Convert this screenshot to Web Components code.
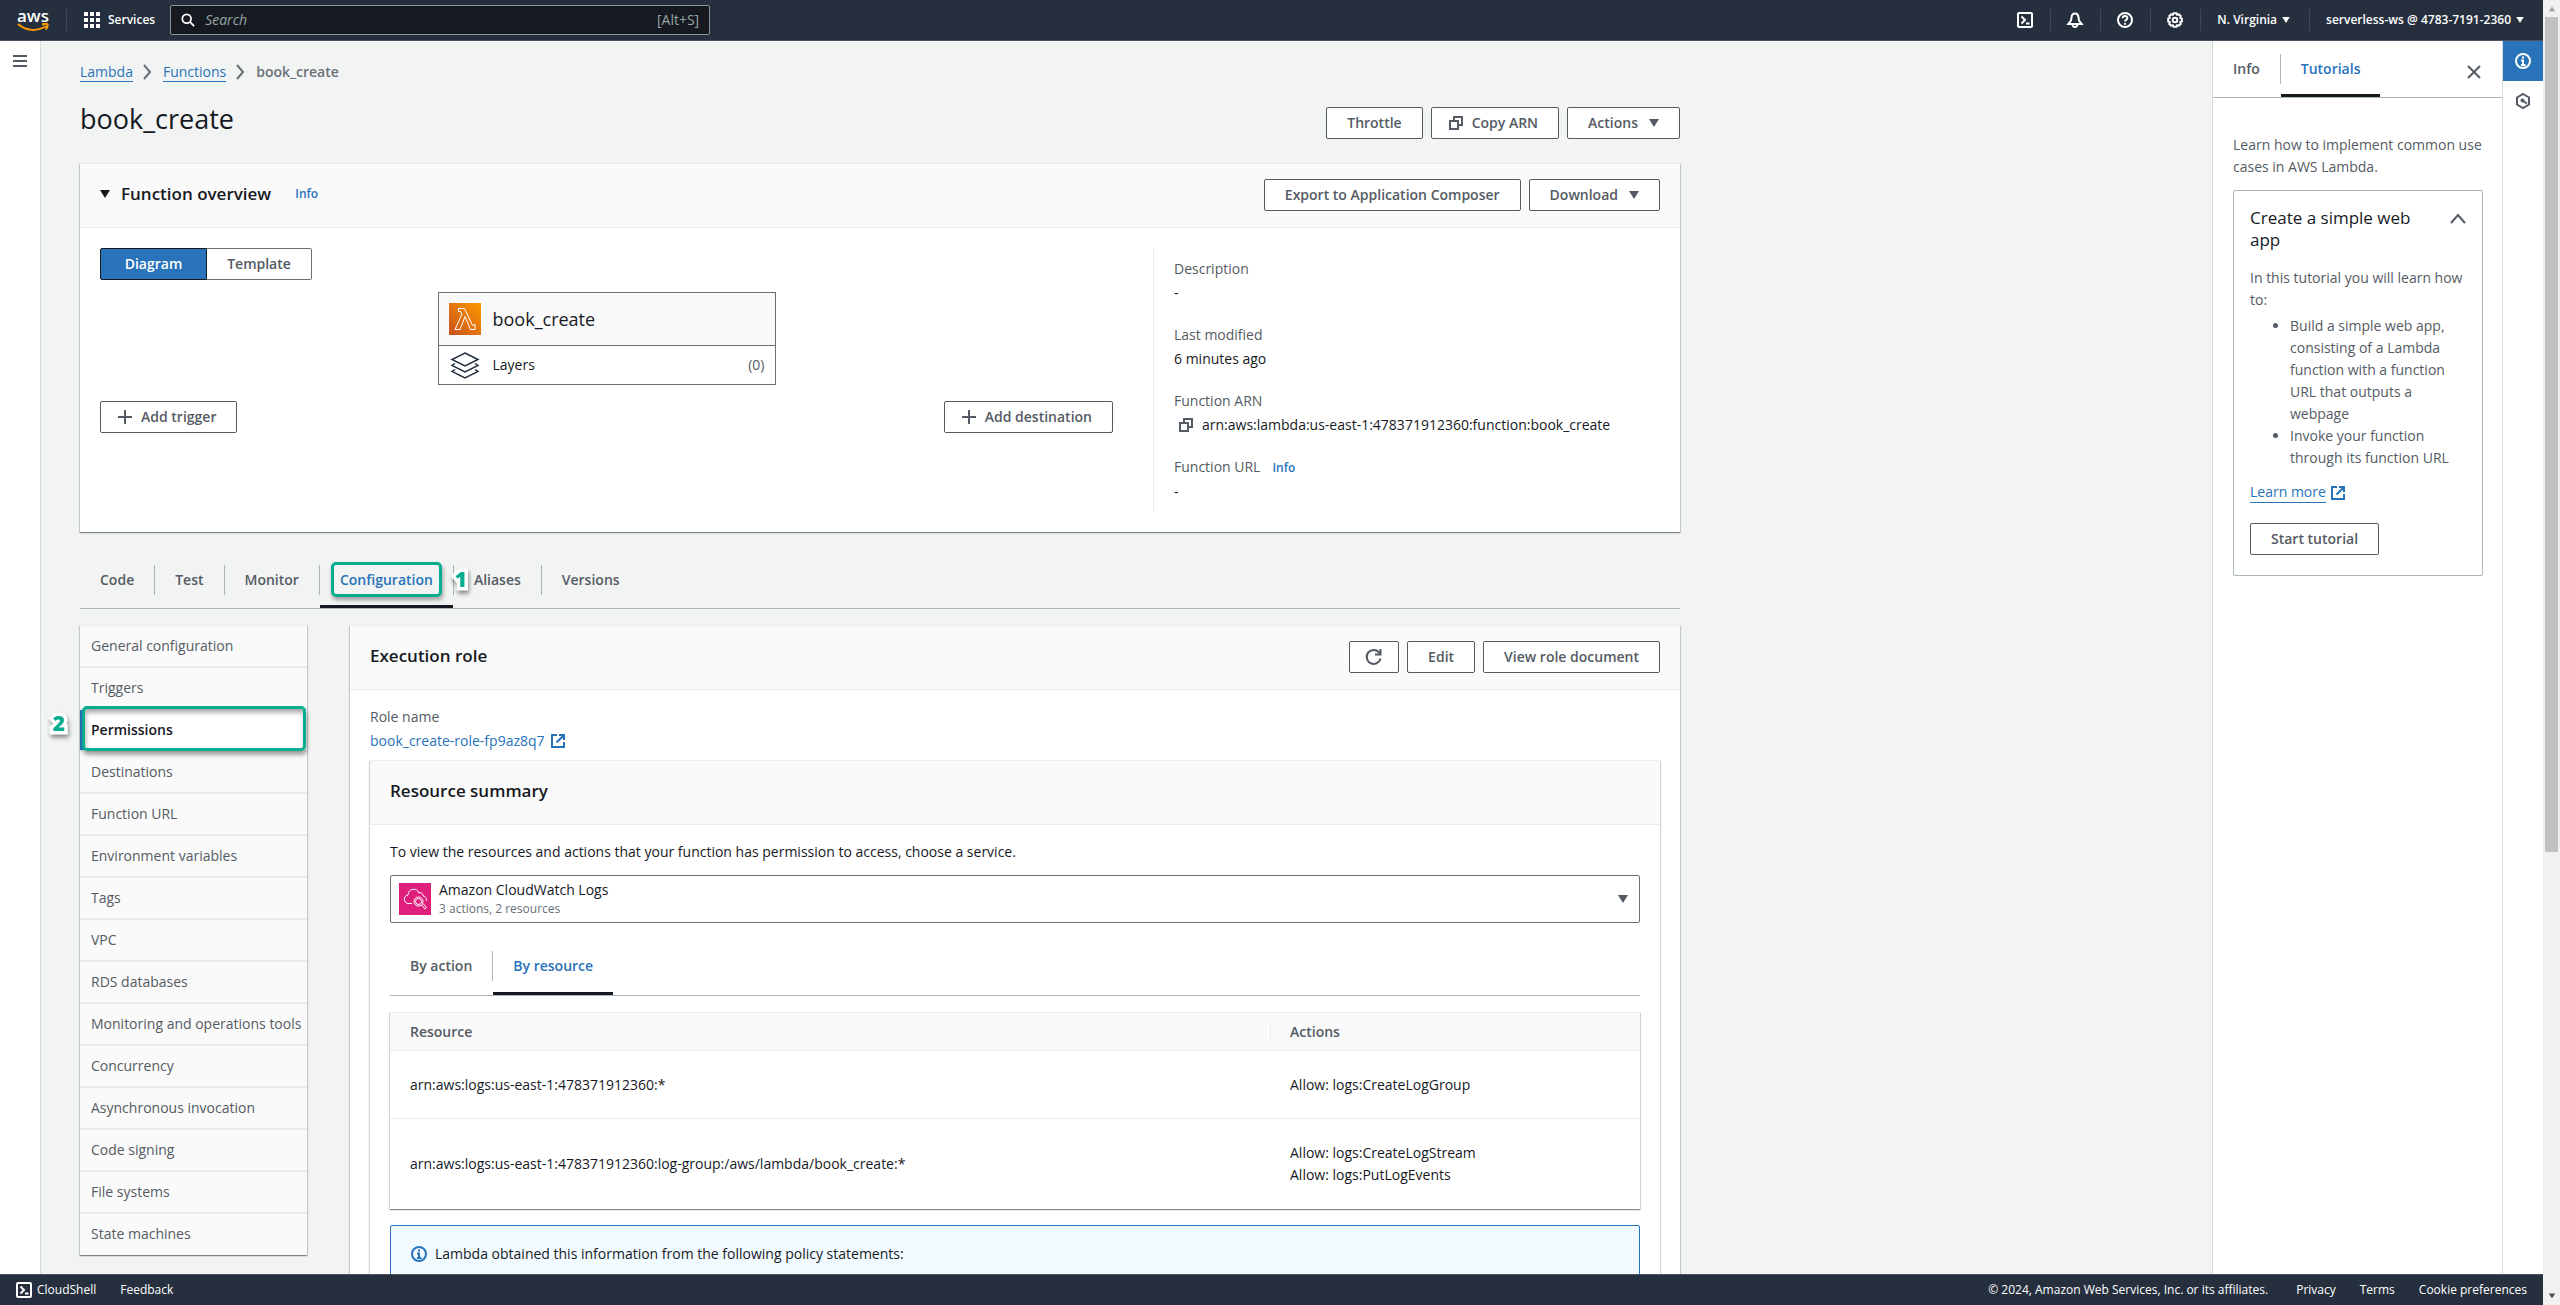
<!DOCTYPE html>
<html lang="en">
<head>
<meta charset="utf-8">
<title>book_create - Lambda</title>
<style>
  html, body { margin: 0; height: 100%; }
  body {
    font-family: "Open Sans", "Noto Sans", sans-serif;
    font-size: 14px; line-height: 22px; color: #16191f; background: #f2f3f3; overflow: hidden;
    --ink: #16191f; --muted: #545b64; --link: #2873ba; --line: #aab7b8; --soft: #eaeded; --navy: #262f3e; --mark: #06ad8f;
  }
</style>
</head>
<body>
<lambda-console></lambda-console>

<script>
const ICONS = {
  menu: '<path d="M1 3h14M1 8h14M1 13h14" stroke-width="2"/>',
  grid: '<path fill="currentColor" stroke="none" d="M0 0h4v4H0zM6 0h4v4H6zM12 0h4v4h-4zM0 6h4v4H0zM6 6h4v4H6zM12 6h4v4h-4zM0 12h4v4H0zM6 12h4v4H6zM12 12h4v4h-4z"/>',
  search: '<circle cx="6.5" cy="6.5" r="5"/><path d="m10.200 10.200 4.800 4.800"/>',
  shell: '<rect x="1" y="1" width="14" height="14" rx="1"/><path d="m4.500 4.500 3.500 3.500-3.500 3.500M9 11.500h3.500"/>',
  bell: '<path d="M8 1.500c-2.200 0-3.300 1.500-3.500 4L4 8.500 1.300 12h13.400L12 8.500l-.500-3c-.200-2.500-1.300-4-3.500-4zM5.500 12.500c.300 3.300 4.700 3.300 5 0"/>',
  help: '<circle cx="8" cy="8" r="7"/><path d="M5.600 6.200c.200-3 4.800-2.800 4.700 0 0 1.700-2.200 1.600-2.300 3.300M8 11v1.700"/>',
  gear: '<path d="M6.500 1.200h3l.700 1.600 1.700-.500 1.800 1.800-.500 1.700 1.600.700v3l-1.600.700.500 1.700-1.800 1.800-1.700-.500-.700 1.600h-3l-.700-1.600-1.700.500-1.800-1.800.500-1.700-1.600-.700v-3l1.600-.700-.500-1.700 1.800-1.800 1.700.500z"/><circle cx="8" cy="8" r="2.300"/>',
  info: '<circle cx="8" cy="8" r="7"/><path stroke-width="2" d="M8 3.500v2M6 7.500h2v4M6 12h4.500"/>',
  hex: '<path d="M8 1 14 4.500v7L8 15l-6-3.500v-7z"/><circle cx="7.500" cy="7.500" r="2" fill="currentColor" stroke="none"/><path d="m8 8 4 2.500"/>',
  caret: '<path fill="currentColor" stroke="none" d="M3 4h10l-5 8z"/>',
  up: '<path d="m1 12 7-8 7 8"/>',
  chevron: '<path d="m4 1 6 7-6 7"/>',
  close: '<path d="m2 2 12 12M14 2 2 14"/>',
  plus: '<path d="M8 1v14M1 8h14"/>',
  copy: '<path d="M2 6h8v8H2zM6 5V2h8v8h-3"/>',
  external: '<path d="M7 2H2v12h12V9M9 2h5v5M14 2 6.500 9.500"/>',
  refresh: '<path d="M14.500 9.500A7 7 0 1 1 13.500 4M14.500 0v5.500H9"/>'
};

const base = '*{box-sizing:border-box}a{color:var(--link);text-decoration:none}button,input,select{font:inherit;color:inherit}h1,h2,h3,p,ul,dl,dd{margin:0;padding:0}ul{list-style:none}button{cursor:pointer}';
function define(name, css, render) {
  customElements.define(name, class extends HTMLElement {
    constructor() { super(); this.attachShadow({ mode: 'open' }); }
    connectedCallback() {
      this.shadowRoot.innerHTML = '<style>' + base + css + '</style>' + render(this);
    }
  });
}

define('ui-icon', ':host{display:inline-flex;flex:none;width:16px;height:16px}:host([size=small]){width:12px;height:12px}svg{width:100%;height:100%;overflow:visible}',
  el => `<svg viewBox="0 0 16 16" fill="none" stroke="currentColor" stroke-width="2" aria-hidden="true">${ICONS[el.getAttribute('name')]}</svg>`);

define('ui-button', `:host{display:inline-flex;flex:none}
  button{display:flex;align-items:center;justify-content:center;gap:8px;height:32px;padding:0 20px;border:1px solid var(--muted);border-radius:2px;background:#fff;color:var(--muted);font-weight:600;white-space:nowrap}
  ::slotted([name=caret]){margin-right:-3px}
  :host([icon-left]) button{padding:0 20px 0 16px}
  :host([icon-only]) button{padding:0 16px}`,
  el => `<button type="button" aria-label="${el.getAttribute('label') || ''}"><slot></slot></button>`.replace(' aria-label=""', ''));

define('ui-card', `:host{display:block;background:#fff;border-top:1px solid var(--soft);box-shadow:0 1px 1px 0 rgba(0,28,36,.3),1px 1px 1px 0 rgba(0,28,36,.15),-1px 1px 1px 0 rgba(0,28,36,.15)}
  header{display:flex;align-items:flex-start;justify-content:space-between;height:64px;padding:15px 20px 0;background:#fafafa;border-bottom:1px solid var(--soft)}
  ::slotted([slot=title]){margin:0;font-size:17px;line-height:30px;font-weight:600}
  .actions{display:flex;gap:8px}`,
  () => `<header><slot name="title"></slot><div class="actions"><slot name="actions"></slot></div></header><slot></slot>`);

define('ui-tabs', `:host{display:block}
  div{display:flex;align-items:center;border-bottom:1px solid var(--line);height:var(--tabs-height,58px)}
  .tab{display:flex;align-items:center;align-self:stretch;position:relative}
  .tab+.tab::before{content:"";width:1px;height:30px;background:var(--line)}
  button{height:100%;border:0;border-bottom:3px solid transparent;border-top:3px solid transparent;padding:0 20px;background:none;font-weight:600;color:var(--muted)}
  button[aria-selected=true]{color:var(--link);border-bottom-color:var(--ink)}
  .mark{position:absolute;left:12px;right:11px;top:11px;bottom:11px;border:3px solid var(--mark);border-radius:5px;box-shadow:1px 3px 4px rgba(0,0,0,.35);pointer-events:none}
  .num{position:absolute;left:100%;top:16px}`,
  el => '<div role="tablist">' + el.getAttribute('items').split('|').map(t =>
    `<span class="tab"><button type="button" role="tab" aria-selected="${t === el.getAttribute('current')}">${t}</button>${t === el.getAttribute('marked') ? '<span class="mark"></span><step-mark class="num">1</step-mark>' : ''}</span>`).join('') + '</div>');

define('step-mark', `:host{display:block;z-index:2;width:16px;text-align:center;font-size:21px;line-height:24px;font-weight:800;color:var(--mark);-webkit-text-stroke:7px #fff;paint-order:stroke fill;filter:drop-shadow(1px 3px 2px rgba(0,0,0,.45))}`,
  () => '<slot></slot>');

define('console-header', `:host{display:flex;align-items:center;height:41px;flex:none;background:var(--navy);border-bottom:1px solid #4a5260;color:#fff;font-size:12px;font-weight:600}
  .logo{display:flex;flex-direction:column;align-items:center;width:66px;font-size:17px;line-height:14px;font-weight:600;color:#fff}
  .logo svg{width:32px;height:9px}
  .services{display:flex;align-items:center;gap:8px;height:22px;padding:0 15px 0 17px;border:0;border-left:1px solid #3f4754;background:none;color:#fff}
  .search{display:flex;align-items:center;gap:8px;width:540px;height:30px;padding:0 10px;background:#16191f;border:1px solid #879596;border-radius:2px;font-size:14px;font-weight:400;color:#95a5a6}
  .search ui-icon{width:14px;height:14px;color:#fff}
  input{flex:1;min-width:0;border:0;outline:0;background:none;color:#fff}
  input::placeholder{color:#95a5a6;font-style:italic;opacity:1}
  nav{display:flex;margin-left:auto;align-items:center}
  nav button{display:flex;align-items:center;justify-content:center;gap:3px;height:22px;min-width:50px;padding:0 17px 0 16px;border:0;border-left:1px solid #3f4754;background:none;color:#fff}
  nav button:first-child{border:0}`,
  () => `<a class="logo" href="#" aria-label="AWS home"><span>aws</span><svg viewBox="0 0 32 9" fill="none" stroke="#f90" stroke-width="2"><path d="M1 1c8 7 19 8 28 2M25 1.500c3-1 5-1 5.500 0 .500 1.500-.500 3.500-2 5"/></svg></a>
  <button class="services" type="button"><ui-icon name="grid"></ui-icon>Services</button>
  <label class="search"><ui-icon name="search"></ui-icon><input type="search" placeholder="Search" aria-label="Search"><span>[Alt+S]</span></label>
  <nav><button aria-label="CloudShell"><ui-icon name="shell"></ui-icon></button><button aria-label="Notifications"><ui-icon name="bell"></ui-icon></button><button aria-label="Help"><ui-icon name="help"></ui-icon></button><button aria-label="Settings"><ui-icon name="gear"></ui-icon></button>
  <button>N. Virginia<ui-icon name="caret" size="small"></ui-icon></button><button>serverless-ws @ 4783-7191-2360<ui-icon name="caret" size="small"></ui-icon></button></nav>`);

define('console-footer', `:host{display:flex;align-items:center;height:31px;flex:none;gap:24px;padding:0 16px;background:var(--navy);border-top:1px solid #4a5260;color:#fff;font-size:12px;font-weight:500}
  a,button{color:#fff;border:0;background:none;padding:0;display:flex;align-items:center;gap:5px}
  .copy{margin-left:auto;margin-right:4px}`,
  () => `<button type="button"><ui-icon name="shell"></ui-icon>CloudShell</button><a href="#">Feedback</a><span class="copy">© 2024, Amazon Web Services, Inc. or its affiliates.</span><a href="#">Privacy</a><a href="#">Terms</a><a href="#">Cookie preferences</a>`);

define('function-diagram', `:host{display:grid;grid-template-columns:1fr auto 1fr;grid-template-rows:auto auto auto;align-content:start;padding-right:40px}
  .seg{grid-column:1/4;display:flex}
  .seg button{height:32px;padding:0 20px;border:1px solid #687078;background:#fff;font-weight:600;color:var(--muted)}
  .seg button:first-child{width:107px;border-color:var(--ink);border-radius:2px 0 0 2px;background:var(--link);color:#fff}
  .seg button:last-child{width:105px;border-left:0;border-radius:0 2px 2px 0}
  .node{grid-column:2;width:338px;margin-top:12px;border:1px solid #687078}
  .row{display:flex;align-items:center;gap:12px;padding:0 10px}
  .name{height:53px;background:#fafafa;border-bottom:1px solid #687078;font-size:18px}
  .layers{height:38px}.layers span{margin-left:auto;color:var(--muted)}
  .row svg{width:32px;height:32px;flex:none}
  .bottom{grid-column:1/4;display:flex;justify-content:space-between;margin-top:16px}`,
  () => `<div class="seg"><button type="button" aria-pressed="true">Diagram</button><button type="button" aria-pressed="false">Template</button></div>
  <div class="node"><div class="row name"><svg viewBox="0 0 32 32"><defs><linearGradient id="g" x1="0" y1="1" x2="1" y2="0"><stop stop-color="#c8511b"/><stop offset="1" stop-color="#f90"/></linearGradient></defs><path fill="url(#g)" d="M0 0h32v32H0z"/><path fill="none" stroke="#fff" d="M9.500 5.500h6l8 17 2.500-1v5h-4.500l-5.500-13-5 13h-5l7-15.500-1.500-2.500h-2z"/></svg>book_create</div>
  <div class="row layers"><svg viewBox="0 0 32 32" fill="none" stroke="#232f3e" stroke-width="1.500"><path d="m16 4 13 6.500L16 17 3 10.500zM6 14.500l-3 2 13 6.500 13-6.500-3-2M6 20.500l-3 2L16 29l13-6.500-3-2"/></svg>Layers<span>(0)</span></div></div>
  <div class="bottom"><ui-button icon-left><ui-icon name="plus"></ui-icon>Add trigger</ui-button><ui-button icon-left><ui-icon name="plus"></ui-icon>Add destination</ui-button></div>`);

define('function-overview', `:host{display:block}
  .title{display:flex;align-items:center;gap:8px}.title ui-icon{margin-left:-3px}.title a{font-size:12px;margin-left:16px}
  .body{display:grid;grid-template-columns:1053px 1fr;padding:20px;height:304px}
  dl{display:flex;flex-direction:column;gap:20px;border-left:1px solid var(--soft);padding:10px 20px 8px;height:264px}
  dt{color:var(--muted)}dd{margin-top:2px;display:flex;align-items:center}
  dt a{font-size:12px;font-weight:600;margin-left:12px}dd ui-icon{margin:0 8px 0 4px;color:var(--muted)}`,
  () => `<ui-card><h2 slot="title" class="title"><ui-icon name="caret"></ui-icon>Function overview<a href="#">Info</a></h2>
  <ui-button slot="actions">Export to Application Composer</ui-button><ui-button slot="actions">Download<ui-icon name="caret"></ui-icon></ui-button>
  <div class="body"><function-diagram></function-diagram>
  <dl><div><dt>Description</dt><dd>-</dd></div><div><dt>Last modified</dt><dd>6 minutes ago</dd></div><div><dt>Function ARN</dt><dd><ui-icon name="copy"></ui-icon>arn:aws:lambda:us-east-1:478371912360:function:book_create</dd></div><div><dt>Function URL<a href="#">Info</a></dt><dd>-</dd></div></dl></div></ui-card>`);

const MENU = ['General configuration','Triggers','Permissions','Destinations','Function URL','Environment variables','Tags','VPC','RDS databases','Monitoring and operations tools','Concurrency','Asynchronous invocation','Code signing','File systems','State machines'];
define('config-menu', `:host{display:block;align-self:start;background:#fafafa;border-top:1px solid var(--soft);box-shadow:0 1px 1px 0 rgba(0,28,36,.3),1px 1px 1px 0 rgba(0,28,36,.15),-1px 1px 1px 0 rgba(0,28,36,.15)}
  li{position:relative;height:42px;border-bottom:2px solid var(--soft)}
  li:last-child{border:0;height:41px}
  a{display:flex;align-items:center;height:40px;padding-left:11px;color:var(--muted);white-space:nowrap}
  a[aria-current]{background:#fff;color:var(--ink);font-weight:600;border-left:5px solid var(--link);padding-left:6px}
  .mark{position:absolute;left:2px;right:1px;top:-4px;height:45px;border:3px solid var(--mark);border-radius:5px;box-shadow:1px 4px 4px rgba(0,0,0,.35),inset 1px 4px 4px rgba(0,0,0,.3);pointer-events:none}
  .num{position:absolute;right:100%;margin-right:13px;top:1px}`,
  () => '<nav aria-label="Configuration"><ul>' + MENU.map(m => `<li><a href="#"${m === 'Permissions' ? ' aria-current="page"' : ''}>${m}</a>${m === 'Permissions' ? '<span class="mark"></span><step-mark class="num">2</step-mark>' : ''}</li>`).join('') + '</ul></nav>');

define('resource-table', `:host{display:block;border-top:1px solid var(--soft);box-shadow:0 1px 1px 0 rgba(0,28,36,.3),1px 1px 1px 0 rgba(0,28,36,.15),-1px 1px 1px 0 rgba(0,28,36,.15)}
  table{width:100%;border-collapse:separate;border-spacing:0;table-layout:fixed}
  th,td{text-align:left;padding:0 20px;font-weight:400}
  th{height:38px;background:#fafafa;border-bottom:1px solid var(--soft);font-weight:600;color:var(--muted)}
  th:first-child{width:880px}
  th+th span{display:block;margin-left:-20px;padding-left:19px;border-left:1px solid var(--soft)}
  td{height:68px}tr:nth-child(2) td{height:90px}tr:not(:last-child) td{border-bottom:1px solid var(--soft)}`,
  () => `<table><thead><tr><th>Resource</th><th><span>Actions</span></th></tr></thead><tbody>
  <tr><td>arn:aws:logs:us-east-1:478371912360:*</td><td>Allow: logs:CreateLogGroup</td></tr>
  <tr><td>arn:aws:logs:us-east-1:478371912360:log-group:/aws/lambda/book_create:*</td><td>Allow: logs:CreateLogStream<br>Allow: logs:PutLogEvents</td></tr></tbody></table>`);

define('service-picker', `:host{display:block}
  label{display:block}
  .box{display:flex;align-items:center;gap:8px;height:48px;margin-top:12px;padding:0 8px;border:1px solid #687078;border-radius:2px;color:var(--muted)}
  svg{width:32px;height:32px;flex:none}
  .col{flex:1;display:flex;flex-direction:column}
  select{appearance:none;border:0;background:none;padding:0;margin:0;height:20px;line-height:20px;color:var(--ink)}
  small{font-size:12px;line-height:18px;color:#687078}`,
  () => `<label for="svc">To view the resources and actions that your function has permission to access, choose a service.</label>
  <div class="box"><svg viewBox="0 0 32 32" fill="none" stroke="#fff"><path fill="#df1f7b" stroke="none" d="M0 0h32v32H0z"/><path d="M13 20.500H9c-5-1-5-7.500 0-8.500 0-7 9.500-7.500 11-2 3-1 4 1 4 3 3 .500 4 3 3 5"/><circle cx="19.500" cy="18.500" r="4.500"/><circle cx="19.500" cy="18.500" r="3"/><path d="m22.500 22 3.500 4 1.500-1.500-3.500-4"/></svg>
  <div class="col"><select id="svc"><option>Amazon CloudWatch Logs</option></select><small>3 actions, 2 resources</small></div><ui-icon name="caret"></ui-icon></div>`);

define('execution-role', `:host{display:block}
  .body{padding:16px 20px 40px}.label{color:var(--muted)}
  .role{display:flex;align-items:center;gap:5px;width:max-content;margin-top:2px}
  ui-card ui-card{margin-top:8px}
  .inner{padding:16px 20px 40px}
  ui-tabs{--tabs-height:59px;margin-top:14px}
  resource-table{margin-top:16px}
  .note{display:flex;gap:8px;align-items:center;margin-top:16px;padding:17px 20px 60px;background:#f1faff;border:1px solid var(--link);border-radius:2px}
  .note ui-icon{color:var(--link)}`,
  () => `<ui-card><h2 slot="title">Execution role</h2>
  <ui-button slot="actions" icon-only label="Refresh"><ui-icon name="refresh"></ui-icon></ui-button><ui-button slot="actions">Edit</ui-button><ui-button slot="actions">View role document</ui-button>
  <div class="body"><div class="label">Role name</div><a class="role" href="#">book_create-role-fp9az8q7<ui-icon name="external"></ui-icon></a>
  <ui-card><h2 slot="title">Resource summary</h2><div class="inner"><service-picker></service-picker>
  <ui-tabs items="By action|By resource" current="By resource"></ui-tabs><resource-table></resource-table>
  <div class="note"><ui-icon name="info"></ui-icon>Lambda obtained this information from the following policy statements:</div></div></ui-card></div></ui-card>`);

define('help-panel', `:host{display:block;width:290px;flex:none;background:#fff;border-left:1px solid #d5dbdb;color:var(--muted)}
  header{display:flex;height:57px;border-bottom:1px solid var(--line);position:relative;align-items:flex-start}
  ui-tabs{--tabs-height:57px;flex:1}
  .close{display:flex;border:0;background:none;color:var(--muted);padding:0;margin:23px 20px 0 0}
  .body{padding:36px 19px 20px 20px}
  .intro{margin:0 -10px 0 0;max-width:256px}
  section{margin-top:12px;padding:16px;border:1px solid var(--line);border-radius:2px}
  h3{display:flex;justify-content:space-between;gap:32px;font-size:17px;line-height:22px;font-weight:400;color:var(--ink)}
  h3 ui-icon{margin-top:4px;color:var(--muted)}
  .lead{margin-top:16px}
  ul{list-style:disc;margin-top:4px;padding:0 10px 0 40px}
  .more{display:inline-flex;align-items:center;gap:4px;margin:13px 0 20px;line-height:20px}.more span{border-bottom:1px solid var(--link)}
  ui-button{display:flex;margin-bottom:4px}`,
  () => `<header><ui-tabs items="Info|Tutorials" current="Tutorials"></ui-tabs><button class="close" type="button" aria-label="Close"><ui-icon name="close"></ui-icon></button></header>
  <div class="body"><p class="intro">Learn how to implement common use cases in AWS Lambda.</p>
  <section><h3>Create a simple web app<ui-icon name="up"></ui-icon></h3><p class="lead">In this tutorial you will learn how to:</p>
  <ul><li>Build a simple web app, consisting of a Lambda function with a function URL that outputs a webpage</li><li>Invoke your function through its function URL</li></ul>
  <a class="more" href="#"><span>Learn more</span><ui-icon name="external"></ui-icon></a><ui-button>Start tutorial</ui-button></section></div>`);

define('side-rail', `:host{display:flex;flex-direction:column;width:41px;flex:none;background:#fff;border:0 solid #d5dbdb;color:var(--muted)}
  :host([side=left]){border-right-width:1px}:host([side=right]){border-left-width:1px}
  button{display:flex;align-items:center;justify-content:center;height:40px;padding:0;border:0;background:none}
  button[aria-pressed=true]{background:var(--link);color:#fff}`,
  el => el.getAttribute('side') === 'left' ? '<button type="button" aria-label="Open navigation"><ui-icon name="menu"></ui-icon></button>'
    : '<button type="button" aria-label="Info" aria-pressed="true"><ui-icon name="info"></ui-icon></button><button type="button" aria-label="Tutorials"><ui-icon name="hex"></ui-icon></button>');

define('scroll-track', `:host{display:flex;flex-direction:column;align-items:center;width:17px;flex:none;background:#f1f1f1;color:#505050}
  ui-icon{width:10px;height:10px}.up{transform:rotate(180deg);margin:4px 0 3px;color:#a3a3a3}.thumb{width:13px;height:64%;background:#c1c1c1}.down{margin:auto 0 4px}`,
  () => `<ui-icon class="up" name="caret"></ui-icon><div class="thumb"></div><ui-icon class="down" name="caret"></ui-icon>`);

define('lambda-console', `:host{display:flex;height:100vh}
  .app{flex:1;min-width:0;display:flex;flex-direction:column}
  .mid{flex:1;min-height:0;display:flex;overflow:hidden}
  main{flex:1;min-width:0;padding:20px 39px 0;overflow:hidden}
  .wrap{max-width:1600px}
  .crumbs{display:flex;align-items:center;gap:7px;font-weight:600;color:#687078}
  .crumbs a{border-bottom:1px solid var(--link);line-height:18px;font-weight:400}
  .head{display:flex;align-items:center;justify-content:space-between;margin-top:12px;height:52px}
  h1{font-size:27px;line-height:36px;font-weight:400;padding-bottom:4px}
  .buttons{display:flex;gap:8px;margin-top:4px}
  function-overview{margin-top:16px}
  .tabs{margin-top:19px}
  .cols{display:grid;grid-template-columns:227px 1fr;gap:43px;margin-top:16px}`,
  () => `<div class="app"><console-header></console-header><div class="mid"><side-rail side="left"></side-rail>
  <main><div class="wrap"><nav class="crumbs" aria-label="Breadcrumbs"><a href="#">Lambda</a><ui-icon name="chevron"></ui-icon><a href="#">Functions</a><ui-icon name="chevron"></ui-icon><span>book_create</span></nav>
  <div class="head"><h1>book_create</h1><div class="buttons"><ui-button>Throttle</ui-button><ui-button icon-left><ui-icon name="copy"></ui-icon>Copy ARN</ui-button><ui-button>Actions<ui-icon name="caret"></ui-icon></ui-button></div></div>
  <function-overview></function-overview>
  <ui-tabs class="tabs" items="Code|Test|Monitor|Configuration|Aliases|Versions" current="Configuration" marked="Configuration"></ui-tabs>
  <div class="cols"><config-menu></config-menu><execution-role></execution-role></div></div></main>
  <help-panel></help-panel><side-rail side="right"></side-rail></div><console-footer></console-footer></div><scroll-track></scroll-track>`);
</script>
</body>
</html>
